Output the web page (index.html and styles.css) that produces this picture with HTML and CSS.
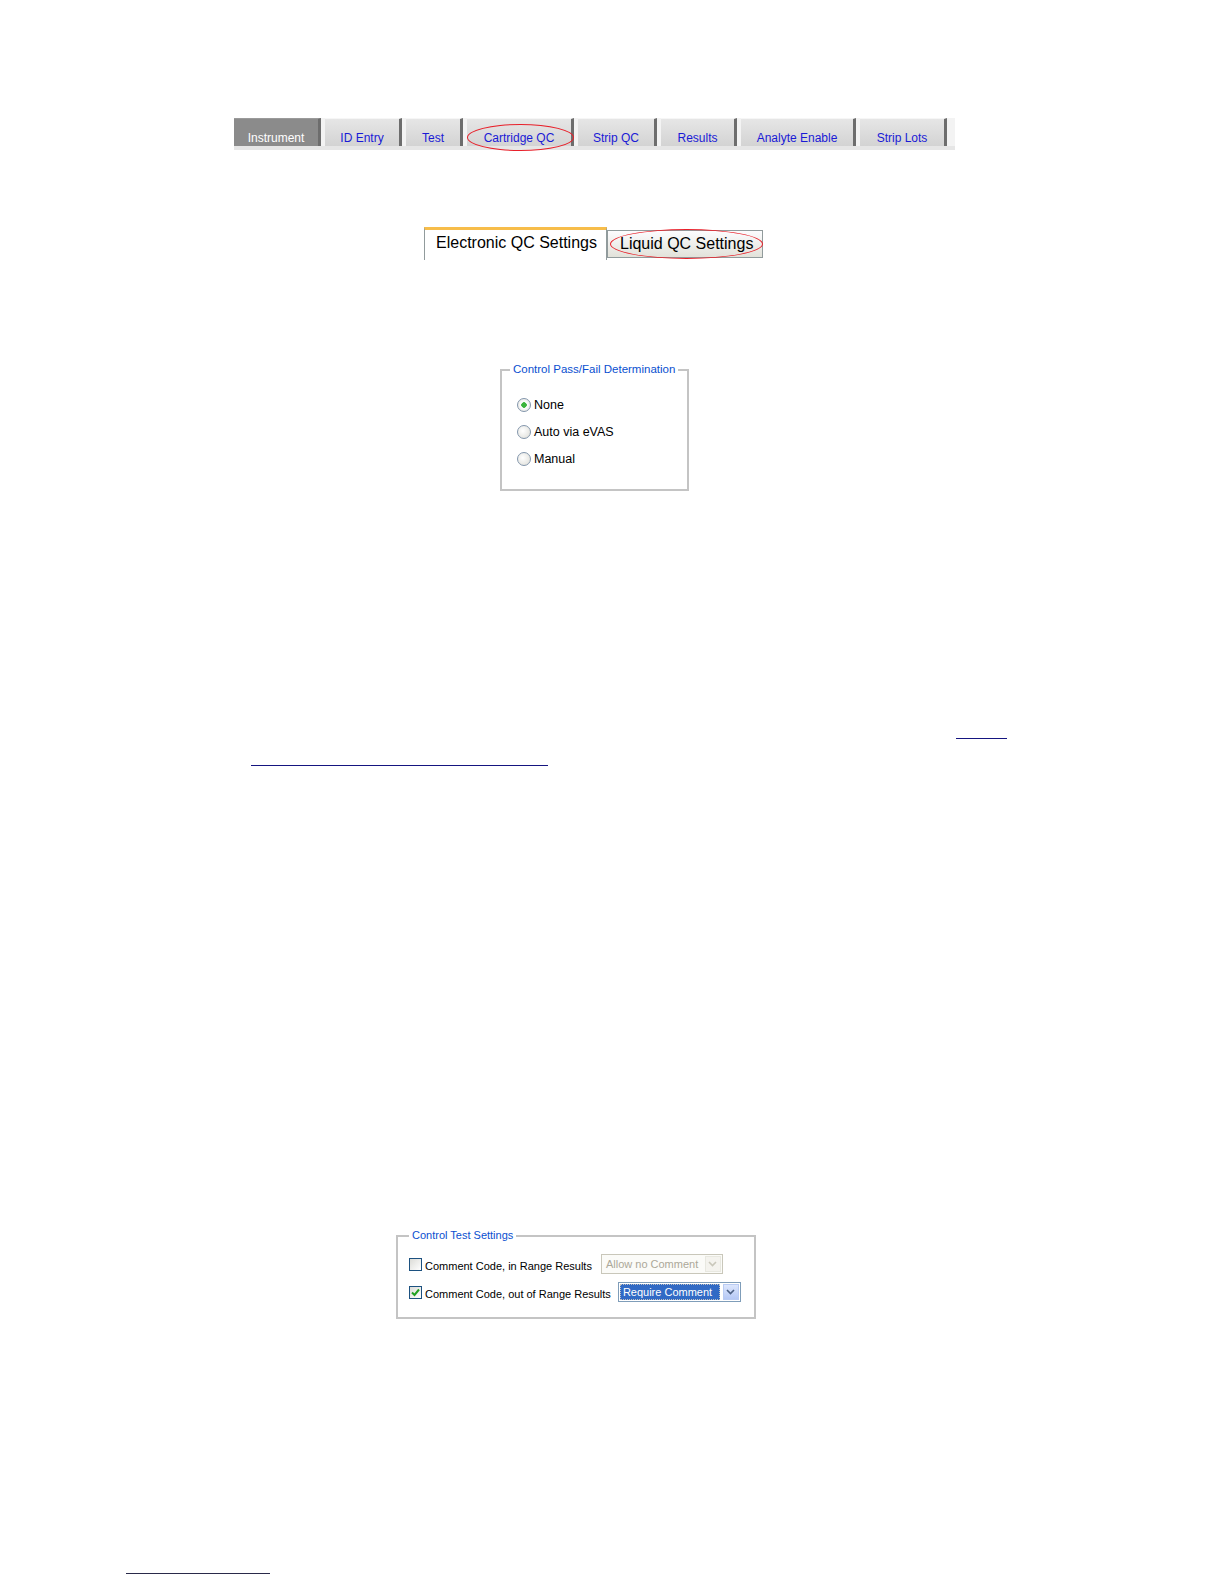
FILE: index.html
```html
<!DOCTYPE html>
<html lang="en">
<head>
    <meta charset="UTF-8">
    <meta name="viewport" content="width=device-width, initial-scale=1.0">
    <title>Cartridge QC Settings</title>
    <link rel="stylesheet" href="styles.css">
</head>
<body>
    <div class="page">
        <!-- main settings tabs -->
        <div class="tabbar">
            <div class="tab current w-instrument">Instrument</div>
            <div class="tab w-id">ID Entry</div>
            <div class="tab w-test">Test</div>
            <div class="tab w-cartridge">Cartridge QC<span class="mark mark-cartridge"></span></div>
            <div class="tab w-strip">Strip QC</div>
            <div class="tab w-results">Results</div>
            <div class="tab w-analyte">Analyte Enable</div>
            <div class="tab w-lots">Strip Lots</div>
        </div>

        <!-- QC sub tabs -->
        <div class="subtabs">
            <div class="subtab selected">Electronic QC Settings</div>
            <div class="subtab">Liquid QC Settings<span class="mark mark-liquid"></span></div>
        </div>

        <fieldset class="group group-pass">
            <legend>Control Pass/Fail Determination</legend>
            <div class="radio-row"><span class="radio checked"></span>None</div>
            <div class="radio-row"><span class="radio"></span>Auto via eVAS</div>
            <div class="radio-row"><span class="radio"></span>Manual</div>
        </fieldset>

        <div class="link-line line-one"></div>
        <div class="link-line line-two"></div>

        <fieldset class="group group-test">
            <legend>Control Test Settings</legend>
            <div class="check-row">
                <span class="checkbox"></span>
                <span class="check-label">Comment Code, in Range Results</span>
                <div class="combo disabled combo-in">
                    <span class="combo-text">Allow no Comment</span>
                    <span class="combo-btn">
                        <svg width="9" height="6" viewBox="0 0 9 6"><path d="M1 1 L4.5 4.5 L8 1" fill="none" stroke="#c9c7ba" stroke-width="1.6"/></svg>
                    </span>
                </div>
            </div>
            <div class="check-row">
                <span class="checkbox">
                    <svg width="11" height="11" viewBox="0 0 11 11"><path d="M2 5.5 L4.5 8 L9 2.5" fill="none" stroke="#21a121" stroke-width="2"/></svg>
                </span>
                <span class="check-label">Comment Code, out of Range Results</span>
                <div class="combo combo-out">
                    <span class="combo-text highlight">Require Comment</span>
                    <span class="combo-btn">
                        <svg width="9" height="6" viewBox="0 0 9 6"><path d="M1 1 L4.5 4.5 L8 1" fill="none" stroke="#4d6185" stroke-width="1.6"/></svg>
                    </span>
                </div>
            </div>
        </fieldset>

        <div class="footnote-rule"></div>
    </div>
</body>
</html>
```

FILE: styles.css
```css
:root {
    --tab-blue: #1a1ad6;
    --group-blue: #0a4fd0;
    --frame: #c4c4c4;
    --ring: #e8202a;
}

body {
    margin: 0;
    background-color: #ffffff;
    font-family: 'Liberation Sans', Arial, sans-serif;
    color: #000000;
}

.page {
    padding-top: 118px;
}

/* top tab bar */
.tabbar {
    display: flex;
    width: 721px;
    height: 28px;
    margin-left: 234px;
    background-color: #f3f3f3;
    border-bottom: 4px solid #e6e6e6;
}

.tab {
    position: relative;
    box-sizing: border-box;
    height: 28px;
    margin-right: 4px;
    padding-top: 8px;
    line-height: 22px;
    font-size: 12px;
    text-align: center;
    color: var(--tab-blue);
    background: linear-gradient(#e6e6e6, #d3d3d3);
    border-top: 1px solid #f6f6f6;
    border-right: 3px solid #6d6d6d;
    white-space: nowrap;
}

.tab.current {
    background: #8b8b8b;
    border-top-color: #9a9a9a;
    color: #ffffff;
}

.w-instrument { width: 87px; }
.w-id { width: 77px; }
.w-test { width: 57px; }
.w-cartridge { width: 107px; }
.w-strip { width: 79px; }
.w-results { width: 76px; }
.w-analyte { width: 115px; }
.w-lots { width: 87px; }

/* red hand-drawn rings */
.mark {
    position: absolute;
    box-sizing: border-box;
    border: 1.5px solid var(--ring);
    border-radius: 50%;
    pointer-events: none;
}

.mark-cartridge {
    left: 0;
    top: 5px;
    width: 107px;
    height: 27px;
}

.mark-liquid {
    left: 2px;
    top: -2px;
    width: 153px;
    height: 30px;
}

/* sub tabs */
.subtabs {
    display: flex;
    align-items: flex-start;
    height: 33px;
    margin-top: 77px;
    margin-left: 424px;
}

.subtab {
    position: relative;
    box-sizing: border-box;
    width: 156px;
    height: 28px;
    margin-top: 3px;
    line-height: 26px;
    padding-left: 12px;
    font-size: 16px;
    background: linear-gradient(#fcfcfe, #e2e2da);
    border: 1px solid #919b9c;
    white-space: nowrap;
}

.subtab.selected {
    width: 183px;
    height: 33px;
    margin-top: 0;
    padding-left: 11px;
    line-height: 26px;
    background: #ffffff;
    border-top: 3px solid #f7bd4a;
    border-bottom: none;
}

/* group boxes */
.group {
    box-sizing: border-box;
    margin: 0;
    border: 2px solid var(--frame);
    font-size: 11.5px;
}

.group legend {
    padding: 0 3px;
    line-height: 13px;
    white-space: nowrap;
    color: var(--group-blue);
}

.group-pass {
    width: 189px;
    margin-top: 103px;
    margin-left: 500px;
    padding: 15px 8px 17px 8px;
}

.radio-row {
    display: flex;
    align-items: center;
    height: 27px;
    gap: 3px;
    font-size: 12.5px;
}

.radio {
    box-sizing: border-box;
    width: 14px;
    height: 14px;
    margin-left: 7px;
    border: 1px solid #8396ac;
    border-radius: 50%;
    background: radial-gradient(circle at 40% 40%, #ffffff, #dcdcd6);
}

.radio.checked {
    background: radial-gradient(circle, #3cb43c 0 2.5px, #ffffff 3px, #dcdcd6);
}

.link-line {
    height: 0;
    border-top: 1px solid #151580;
}

.line-one {
    width: 51px;
    margin-top: 247px;
    margin-left: 956px;
}

.line-two {
    width: 297px;
    margin-top: 26px;
    margin-left: 251px;
}

.group-test {
    width: 360px;
    margin-top: 463px;
    margin-left: 396px;
    padding: 12px 8px 15px 11px;
    font-size: 11px;
}

.check-row {
    display: flex;
    align-items: center;
    height: 20px;
}

.check-row + .check-row {
    margin-top: 8px;
}

.checkbox {
    display: flex;
    align-items: center;
    justify-content: center;
    box-sizing: border-box;
    width: 13px;
    height: 13px;
    border: 1px solid #1c5180;
    background: linear-gradient(135deg, #dcdcd7, #ffffff);
}

.check-label {
    margin-left: 3px;
    padding-top: 3px;
}

.combo {
    display: flex;
    align-items: center;
    box-sizing: border-box;
    height: 20px;
    padding: 1px;
    margin-left: 9px;
    border: 1px solid #7f9db9;
    background: #ffffff;
}

.combo-in {
    width: 122px;
}

.combo-out {
    width: 123px;
    margin-left: 7px;
}

.combo-text {
    flex: 1;
    padding-left: 3px;
    line-height: 16px;
    white-space: nowrap;
}

.combo-text.highlight {
    flex: none;
    width: 97px;
    margin-right: 3px;
    background: #316ac5;
    color: #ffffff;
    outline: 1px dotted #c0c0c0;
    outline-offset: -1px;
}

.combo-btn {
    display: flex;
    align-items: center;
    justify-content: center;
    width: 16px;
    height: 16px;
    box-sizing: border-box;
    border: 1px solid #b9cbf3;
    background: linear-gradient(#dce6fd, #b5c8f5);
}

.combo.disabled {
    border-color: #c9c7ba;
    background: #fbfbf8;
}

.combo.disabled .combo-text {
    color: #aca899;
}

.combo.disabled .combo-btn {
    border-color: #e8e8e0;
    background: #f4f3ee;
}

.footnote-rule {
    width: 144px;
    height: 0;
    margin-top: 254px;
    margin-left: 126px;
    border-top: 1px solid #2a2a4a;
}
```
